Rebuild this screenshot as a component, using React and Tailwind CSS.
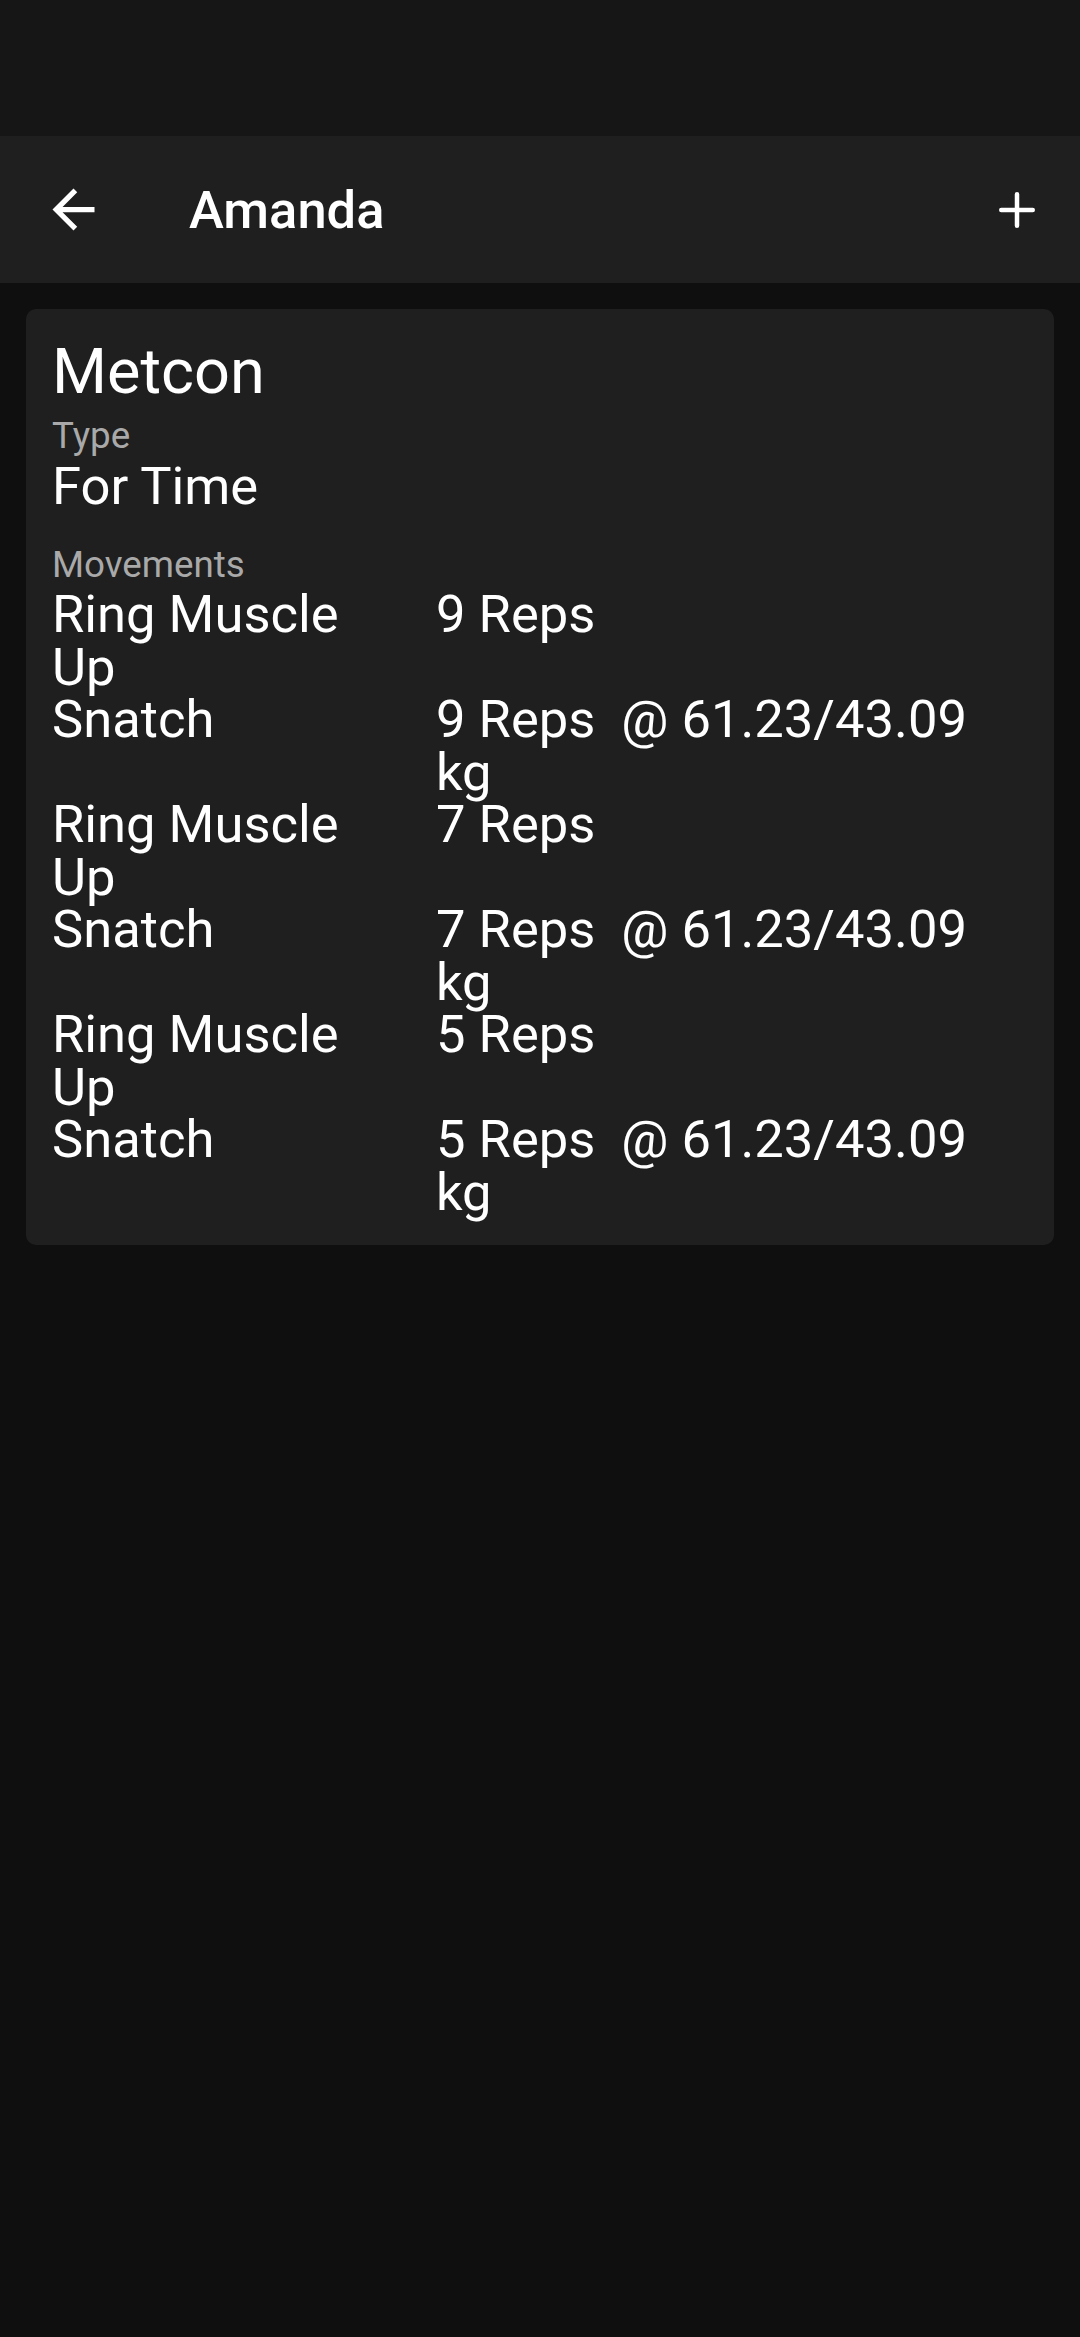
import React from 'react';

const movements = [
  { name: 'Ring Muscle Up', detail: '9 Reps' },
  { name: 'Snatch', detail: '9 Reps  @ 61.23/43.09 kg' },
  { name: 'Ring Muscle Up', detail: '7 Reps' },
  { name: 'Snatch', detail: '7 Reps  @ 61.23/43.09 kg' },
  { name: 'Ring Muscle Up', detail: '5 Reps' },
  { name: 'Snatch', detail: '5 Reps  @ 61.23/43.09 kg' },
];

const App = () => {
  return (
    <div className="min-h-screen bg-[#0f0f0f] text-white font-['Roboto',sans-serif]">
      {/* Status bar */}
      <div className="h-[136px] bg-[#161616]" />

      {/* App bar */}
      <header className="h-[147px] bg-[#1f1f1f] flex items-center pl-[42px] pr-[45px]">
        <svg width="63" height="63" viewBox="0 0 24 24" fill="#ffffff">
          <path d="M20 11H7.83l5.59-5.59L12 4l-8 8 8 8 1.41-1.41L7.83 13H20v-2z" />
        </svg>
        <h1 className="ml-[84px] text-[52.5px] leading-[62px] font-medium flex-1">Amanda</h1>
        <svg width="36" height="36" viewBox="0 0 36 36" fill="none" stroke="#ffffff" strokeWidth="4.5" strokeLinecap="round">
          <path d="M18 2.25v31.5M2.25 18h31.5" />
        </svg>
      </header>

      {/* Workout card */}
      <main className="px-[26px] pt-[26px]">
        <div className="bg-[#1f1f1f] rounded-[10px] px-[26px] pt-[26px] pb-[27px]">
          <h2 className="text-[63px] leading-[74px]">Metcon</h2>
          <p className="mt-[5px] text-[36.75px] leading-[43px] text-[#a9a9a9]">Type</p>
          <p className="mt-[3px] text-[52.5px] leading-[52px]">For Time</p>
          <p className="mt-[31px] text-[36.75px] leading-[43px] text-[#a9a9a9]">Movements</p>
          <div className="mt-[2px] grid grid-cols-[330px_570px] gap-x-[54px] text-[52.5px] leading-[52.5px]">
            {movements.map((m, i) => (
              <React.Fragment key={i}>
                <span>{m.name}</span>
                <span className="whitespace-pre-wrap">{m.detail}</span>
              </React.Fragment>
            ))}
          </div>
        </div>
      </main>
    </div>
  );
};

export default App;
